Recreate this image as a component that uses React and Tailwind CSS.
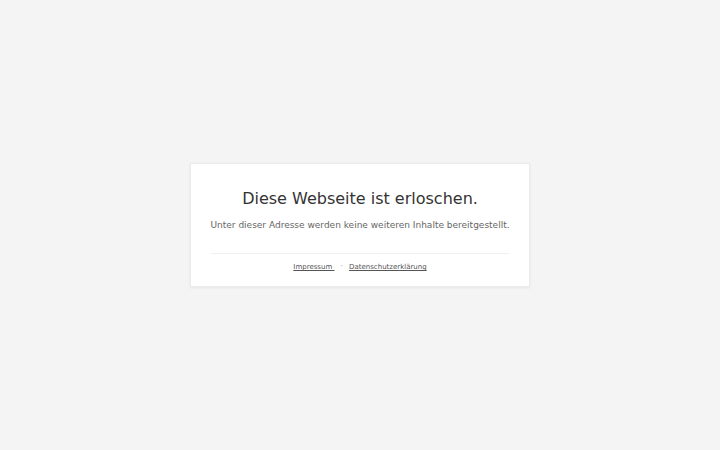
export default function App() {
  return (
    <div
      className="min-h-screen w-full bg-[#f4f4f4] flex items-center justify-center"
      style={{ fontFamily: '"DejaVu Sans", sans-serif' }}
    >
      <div className="w-[340px] bg-white border border-[#ebebeb] shadow-[0_1px_3px_rgba(0,0,0,0.06)] px-5 pt-[25px] pb-[14px] text-center">
        <h1 className="text-[16px] leading-[20px] text-[#333]">Diese Webseite ist erloschen.</h1>
        <p className="mt-[10px] text-[9px] leading-[12px] text-[#666] whitespace-nowrap -mx-2">
          Unter dieser Adresse werden keine weiteren Inhalte bereitgestellt.
        </p>
        <div className="mt-[22px] border-t border-[#f0f0f0] pt-[8px] text-[7px] leading-[10px] text-[#555] flex items-center justify-center gap-[6px]">
          <a href="#" className="underline">Impressum&nbsp;</a>
          <span className="text-[#aaa] text-[8px]">·</span>
          <a href="#" className="underline">Datenschutzerklärung</a>
        </div>
      </div>
    </div>
  )
}
